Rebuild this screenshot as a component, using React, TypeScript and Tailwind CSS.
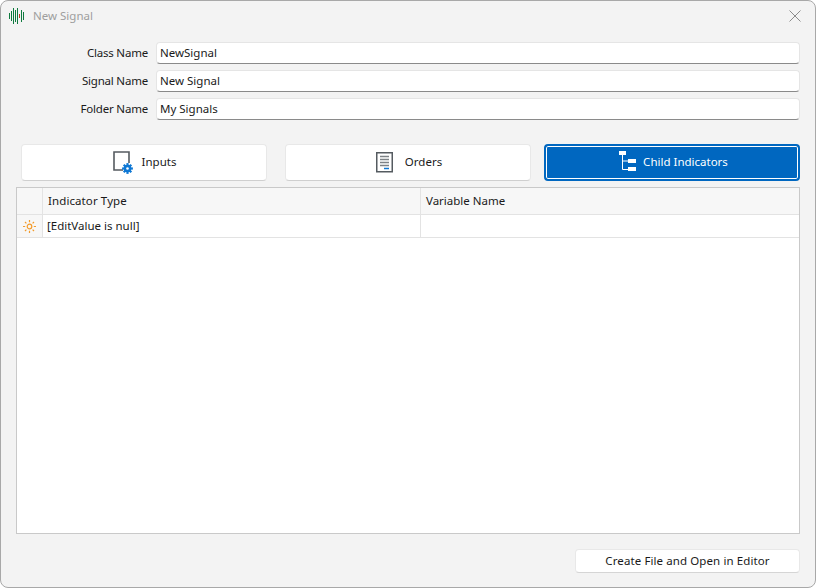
const font = "font-['Noto_Sans','Open_Sans',sans-serif]";

function WaveIcon() {
  const bars = [
    [0, 5, 6, "#0f7a3f"],
    [2, 3, 10, "#0f7a3f"],
    [4, 0, 16, "#0f7a3f"],
    [6, 2, 12, "#0f7a3f"],
    [8, 0, 16, "#0f7a3f"],
    [10, 6, 4, "#c0392b"],
    [12, 2, 12, "#0f7a3f"],
    [14, 4, 8, "#0f7a3f"],
  ] as const;
  return (
    <svg width="16" height="16" viewBox="0 0 16 16">
      {bars.map(([x, y, h, c], i) => (
        <rect key={i} x={x} y={y} width="1" height={h} fill={c} />
      ))}
    </svg>
  );
}

function InputsIcon() {
  return (
    <svg width="22" height="24" viewBox="0 0 22 24" fill="none">
      <path d="M11 20H2V2h15v11" stroke="#555b60" strokeWidth="1.6" />
      <g transform="translate(15.5 18.5)" fill="#0f78d4">
        <circle r="3.8" />
        <rect x="-1.1" y="-5.4" width="2.2" height="10.8" />
        <rect x="-5.4" y="-1.1" width="10.8" height="2.2" />
        <rect x="-1.1" y="-5.4" width="2.2" height="10.8" transform="rotate(45)" />
        <rect x="-1.1" y="-5.4" width="2.2" height="10.8" transform="rotate(-45)" />
      </g>
      <circle cx="15.5" cy="18.5" r="1.3" fill="#fff" />
    </svg>
  );
}

function OrdersIcon() {
  return (
    <svg width="20" height="24" viewBox="0 0 20 24" fill="none">
      <rect x="2.75" y="2.75" width="15.5" height="19" stroke="#555b60" strokeWidth="1.5" />
      <path d="M6 6.5h9M6 9.5h9M6 12.5h9M6 15.5h9" stroke="#7d8286" strokeWidth="1.3" />
      <path d="M10 18.5h5" stroke="#0f78d4" strokeWidth="1.5" />
    </svg>
  );
}

function TreeIcon() {
  return (
    <svg width="18" height="24" viewBox="0 0 18 24" fill="white">
      <rect x="0" y="1" width="7" height="4" />
      <rect x="9" y="9" width="8" height="4" />
      <rect x="9" y="17" width="8" height="4" />
      <path d="M3.5 5v14.5H9M3.5 11H9" fill="none" stroke="white" strokeWidth="1" />
    </svg>
  );
}

function SunIcon() {
  return (
    <svg width="13" height="13" viewBox="0 0 13 13" fill="none" stroke="#f39c2c" strokeWidth="1.2">
      <circle cx="6.5" cy="6.5" r="2.3" />
      <path d="M6.5 0v2.2M6.5 10.8V13M0 6.5h2.2M10.8 6.5H13M2 2l1.4 1.4M9.6 9.6 11 11M2 11l1.4-1.4M9.6 3.4 11 2" />
    </svg>
  );
}

function Field({ label, value }: { label: string; value: string }) {
  return (
    <div className="flex items-center h-[22px]">
      <div className="w-[147px] pb-px text-right text-[11.5px] tracking-[-0.2px] text-[#1a1a1a] shrink-0">{label}</div>
      <div className="ml-2 flex-1 h-[22px] flex items-center pl-[3px] bg-white rounded-[4px] border border-[#e5e5e5] border-b-[#8a8a8a] text-[11.5px] text-[#1a1a1a]">
        {value}
      </div>
    </div>
  );
}

export default function App() {
  return (
    <div className={`${font} w-[816px] h-[588px] flex flex-col bg-[#f3f3f3] border border-[#a8a8a8] rounded-lg overflow-hidden`}>
      <div className="h-[30px] flex items-center pl-2 pr-[14px] shrink-0">
        <WaveIcon />
        <span className="ml-2 text-[11.5px] text-[#9e9e9e]">New Signal</span>
        <svg className="ml-auto" width="12" height="12" viewBox="0 0 12 12" stroke="#8c8c8c" strokeWidth="1">
          <path d="M0.5 0.5 11.5 11.5M11.5 0.5 0.5 11.5" />
        </svg>
      </div>

      <div className="flex flex-col gap-[6px] mt-[11px] pr-[15px] shrink-0">
        <Field label="Class Name" value="NewSignal" />
        <Field label="Signal Name" value="New Signal" />
        <Field label="Folder Name" value="My Signals" />
      </div>

      <div className="flex mt-6 pl-5 pr-[15px] h-[37px] shrink-0 text-[11.5px] text-[#1a1a1a]">
        <button className="w-[246px] pb-px flex items-center justify-center gap-2 bg-white rounded-[4px] border border-[#e8e8e8] border-b-[#cfcfcf]">
          <InputsIcon />
          <span>Inputs</span>
        </button>
        <button className="ml-[18px] w-[246px] pb-px flex items-center justify-center gap-[11px] bg-white rounded-[4px] border border-[#e8e8e8] border-b-[#cfcfcf]">
          <OrdersIcon />
          <span>Orders</span>
        </button>
        <button className="ml-[13px] flex-1 pb-px flex items-center justify-center gap-[6px] pl-[3px] bg-[#0067c0] rounded-[4px] text-white border-2 border-[#0067c0] shadow-[inset_0_0_0_1px_#ffffff]">
          <TreeIcon />
          <span>Child Indicators</span>
        </button>
      </div>

      <div className="mt-[6px] mx-[15px] h-[347px] shrink-0 bg-white border border-[#c9c9c9] text-[11.5px] text-[#1a1a1a] flex flex-col">
        <div className="flex h-[27px] bg-[#f7f7f7] border-b border-[#e3e3e3] shrink-0">
          <div className="w-[26px] border-r border-[#e3e3e3]" />
          <div className="w-[378px] pb-px border-r border-[#e3e3e3] flex items-center pl-[5px] tracking-[0.1px]">Indicator Type</div>
          <div className="flex-1 pb-px flex items-center pl-[5px]">Variable Name</div>
        </div>
        <div className="flex h-[23px] border-b border-[#e3e3e3] shrink-0">
          <div className="w-[26px] bg-[#f7f7f7] border-r border-[#e3e3e3] flex items-center justify-center">
            <SunIcon />
          </div>
          <div className="w-[378px] border-r border-[#e3e3e3] flex items-center pl-[4px]">[EditValue is null]</div>
          <div className="flex-1" />
        </div>
      </div>

      <div className="flex justify-end mt-[15px] pr-[15px]">
        <button className="w-[225px] h-[24px] bg-white rounded-[4px] border border-[#e8e8e8] border-b-[#d5d5d5] text-[11.5px] tracking-[0.1px] text-[#1a1a1a]">
          Create File and Open in Editor
        </button>
      </div>
    </div>
  );
}
